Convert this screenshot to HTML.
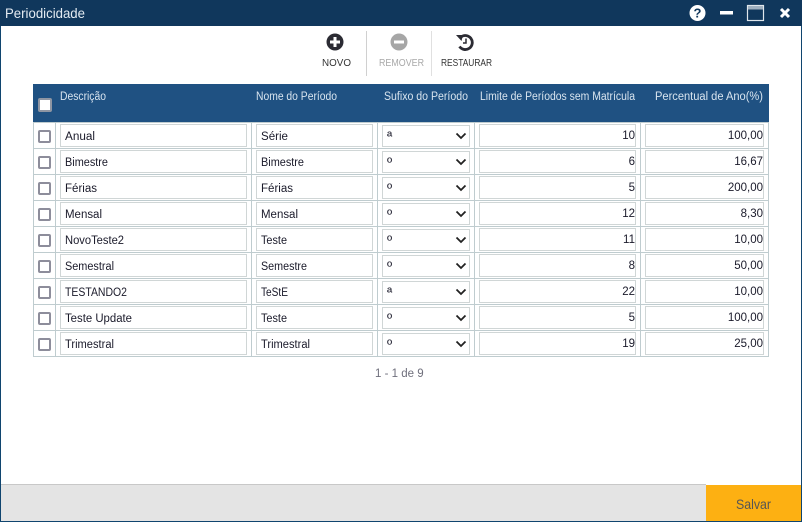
<!DOCTYPE html>
<html lang="pt"><head><meta charset="utf-8"><title>Periodicidade</title>
<style>
html,body{margin:0;padding:0;width:802px;height:522px;overflow:hidden;background:#fff}
body{position:relative;font-family:"Liberation Sans",sans-serif;font-size:11.5px;color:#1a1a2a}
.a{position:absolute}
.t{position:absolute;white-space:nowrap;line-height:14px}
.i{position:absolute;box-sizing:border-box;height:23px;border:1px solid #d0d6d6;background:#fff;line-height:23px;white-space:nowrap}
.d{left:60px;width:187px}
.n{left:256px;width:117px}
.s{left:382px;width:88px;height:22px;font-size:14px;line-height:20px;padding-left:4px}
.l{left:479px;width:157px;text-align:right}
.p{left:645px;width:119px;text-align:right}
.c{position:absolute;left:38px;width:13px;height:13px;box-sizing:border-box;border:2px solid #8d8d9b;border-radius:2px;background:#fff}
.hl{position:absolute;left:33px;width:736px;height:1px;background:#bfcccf}
.vl{position:absolute;top:122px;height:235px;width:1px;background:#bfcccf}
.ar{position:absolute;left:455px;width:12px;height:8px}
#o{position:absolute;left:0;top:0;font-family:"Liberation Sans",sans-serif}
#o text{font-size:11.5px;fill:#1a1a2a}
#o .h{fill:#d8e4ef;font-size:11.5px}
#o .b{font-size:10px;fill:#333}
</style></head><body>
<div class="a" style="left:0;top:0;width:802px;height:26px;background:#10375c"></div>
<div class="a" style="left:0;top:26px;width:1px;height:496px;background:#10456f"></div>
<div class="a" style="left:801px;top:26px;width:1px;height:496px;background:#10456f"></div>

<svg class="a" style="left:688px;top:4px" width="110" height="18" viewBox="0 0 110 18">
<circle cx="9.5" cy="9" r="8" fill="#fff"/>
<text x="9.5" y="13.5" text-anchor="middle" font-family="Liberation Sans" font-weight="bold" font-size="13" fill="#10375c">?</text>
<rect x="32" y="7" width="13" height="3.5" fill="#fff"/>
<rect x="59.5" y="1.5" width="16" height="15" fill="none" stroke="#dfe6ec" stroke-width="1.2"/>
<rect x="60" y="2" width="15" height="3.5" fill="#9fb0c0"/>
<path d="M93 5l8 8M101 5l-8 8" stroke="#fff" stroke-width="3"/>
</svg>

<svg class="a" style="left:326px;top:33px" width="18" height="18" viewBox="0 0 18 18">
<circle cx="9" cy="9" r="8.5" fill="#2b2b33"/><path d="M9 4v10M4 9h10" stroke="#fff" stroke-width="3"/></svg>
<div class="a" style="left:366px;top:31px;width:1px;height:45px;background:#d0d0d0"></div>
<svg class="a" style="left:390px;top:33px" width="18" height="18" viewBox="0 0 18 18">
<circle cx="9" cy="9" r="8.5" fill="#a6a6a6"/><path d="M4 9h10" stroke="#fff" stroke-width="3"/></svg>
<div class="a" style="left:431px;top:31px;width:1px;height:45px;background:#e0e0e0"></div>
<svg class="a" style="left:455px;top:33px" width="20" height="18" viewBox="0 0 20 18">
<path d="M6 4A7 7 0 1 1 4.5 13.5" fill="none" stroke="#2b2b33" stroke-width="2.8"/>
<path d="M1 2l7 0-1.5 6z" fill="#2b2b33"/>
<path d="M11 5.5v4.5H8" fill="none" stroke="#2b2b33" stroke-width="1.5"/></svg>

<div class="a" style="left:33px;top:84px;width:736px;height:38px;background:#1f5182"></div>
<div class="c" style="top:98px;width:14px;height:14px;border-color:#8f96a3"></div>

<div class="hl" style="top:122px"></div><div class="hl" style="top:148px"></div><div class="hl" style="top:174px"></div><div class="hl" style="top:200px"></div><div class="hl" style="top:226px"></div><div class="hl" style="top:252px"></div><div class="hl" style="top:278px"></div><div class="hl" style="top:304px"></div><div class="hl" style="top:330px"></div><div class="hl" style="top:356px"></div>
<div class="vl" style="left:33px"></div><div class="vl" style="left:55px"></div><div class="vl" style="left:251px"></div><div class="vl" style="left:377px"></div><div class="vl" style="left:474px"></div><div class="vl" style="left:640px"></div><div class="vl" style="left:768px"></div>

<div class="c" style="top:130px"></div><div class="i d" style="top:124px"></div><div class="i n" style="top:124px"></div><div class="i s" style="top:125px">ª</div><div class="i l" style="top:124px">10</div><div class="i p" style="top:124px">100,00</div>
<div class="c" style="top:156px"></div><div class="i d" style="top:150px"></div><div class="i n" style="top:150px"></div><div class="i s" style="top:151px">º</div><div class="i l" style="top:150px">6</div><div class="i p" style="top:150px">16,67</div>
<div class="c" style="top:182px"></div><div class="i d" style="top:176px"></div><div class="i n" style="top:176px"></div><div class="i s" style="top:177px">º</div><div class="i l" style="top:176px">5</div><div class="i p" style="top:176px">200,00</div>
<div class="c" style="top:208px"></div><div class="i d" style="top:202px"></div><div class="i n" style="top:202px"></div><div class="i s" style="top:203px">º</div><div class="i l" style="top:202px">12</div><div class="i p" style="top:202px">8,30</div>
<div class="c" style="top:234px"></div><div class="i d" style="top:228px"></div><div class="i n" style="top:228px"></div><div class="i s" style="top:229px">º</div><div class="i l" style="top:228px">11</div><div class="i p" style="top:228px">10,00</div>
<div class="c" style="top:260px"></div><div class="i d" style="top:254px"></div><div class="i n" style="top:254px"></div><div class="i s" style="top:255px">º</div><div class="i l" style="top:254px">8</div><div class="i p" style="top:254px">50,00</div>
<div class="c" style="top:286px"></div><div class="i d" style="top:280px"></div><div class="i n" style="top:280px"></div><div class="i s" style="top:281px">ª</div><div class="i l" style="top:280px">22</div><div class="i p" style="top:280px">10,00</div>
<div class="c" style="top:312px"></div><div class="i d" style="top:306px"></div><div class="i n" style="top:306px"></div><div class="i s" style="top:307px">º</div><div class="i l" style="top:306px">5</div><div class="i p" style="top:306px">100,00</div>
<div class="c" style="top:338px"></div><div class="i d" style="top:332px"></div><div class="i n" style="top:332px"></div><div class="i s" style="top:333px">º</div><div class="i l" style="top:332px">19</div><div class="i p" style="top:332px">25,00</div>

<svg class="ar" style="top:132px" viewBox="0 0 12 8"><path d="M1.5 1.5L6 6l4.5-4.5" fill="none" stroke="#222" stroke-width="1.8"/></svg>
<svg class="ar" style="top:158px" viewBox="0 0 12 8"><path d="M1.5 1.5L6 6l4.5-4.5" fill="none" stroke="#222" stroke-width="1.8"/></svg>
<svg class="ar" style="top:184px" viewBox="0 0 12 8"><path d="M1.5 1.5L6 6l4.5-4.5" fill="none" stroke="#222" stroke-width="1.8"/></svg>
<svg class="ar" style="top:210px" viewBox="0 0 12 8"><path d="M1.5 1.5L6 6l4.5-4.5" fill="none" stroke="#222" stroke-width="1.8"/></svg>
<svg class="ar" style="top:236px" viewBox="0 0 12 8"><path d="M1.5 1.5L6 6l4.5-4.5" fill="none" stroke="#222" stroke-width="1.8"/></svg>
<svg class="ar" style="top:262px" viewBox="0 0 12 8"><path d="M1.5 1.5L6 6l4.5-4.5" fill="none" stroke="#222" stroke-width="1.8"/></svg>
<svg class="ar" style="top:288px" viewBox="0 0 12 8"><path d="M1.5 1.5L6 6l4.5-4.5" fill="none" stroke="#222" stroke-width="1.8"/></svg>
<svg class="ar" style="top:314px" viewBox="0 0 12 8"><path d="M1.5 1.5L6 6l4.5-4.5" fill="none" stroke="#222" stroke-width="1.8"/></svg>
<svg class="ar" style="top:340px" viewBox="0 0 12 8"><path d="M1.5 1.5L6 6l4.5-4.5" fill="none" stroke="#222" stroke-width="1.8"/></svg>

<div class="t" style="left:375px;top:367px;color:#6f6f7c">1 - 1 de 9</div>

<div class="a" style="left:1px;top:484px;width:705px;height:37px;box-sizing:border-box;border-top:1px solid #c8c8c8;background:#e4e4e4"></div>
<div class="a" style="left:706px;top:485px;width:95px;height:36px;background:#fdb012"></div>
<div class="a" style="left:0;top:521px;width:802px;height:1px;background:#10456f"></div>

<svg id="o" width="802" height="522" viewBox="0 0 802 522">
<text x="5" y="18" textLength="80" lengthAdjust="spacingAndGlyphs" style="font-size:14px;fill:#e4ebf2">Periodicidade</text>
<text class="b" x="322" y="66" textLength="29" lengthAdjust="spacingAndGlyphs">NOVO</text>
<text class="b" x="379" y="66" textLength="45" lengthAdjust="spacingAndGlyphs" style="fill:#a8a8a8">REMOVER</text>
<text class="b" x="441" y="66" textLength="51" lengthAdjust="spacingAndGlyphs">RESTAURAR</text>
<text class="h" x="60" y="100" textLength="46" lengthAdjust="spacingAndGlyphs">Descrição</text>
<text class="h" x="256" y="100" textLength="81" lengthAdjust="spacingAndGlyphs">Nome do Período</text>
<text class="h" x="384" y="100" textLength="84" lengthAdjust="spacingAndGlyphs">Sufixo do Período</text>
<text class="h" x="480" y="100" textLength="155" lengthAdjust="spacingAndGlyphs">Limite de Períodos sem Matrícula</text>
<text class="h" x="655" y="100" textLength="108" lengthAdjust="spacingAndGlyphs">Percentual de Ano(%)</text>
<text x="65" y="140" textLength="30" lengthAdjust="spacingAndGlyphs">Anual</text><text x="261" y="140" textLength="27" lengthAdjust="spacingAndGlyphs">Série</text>
<text x="65" y="166" textLength="43" lengthAdjust="spacingAndGlyphs">Bimestre</text><text x="261" y="166" textLength="43" lengthAdjust="spacingAndGlyphs">Bimestre</text>
<text x="65" y="192" textLength="32" lengthAdjust="spacingAndGlyphs">Férias</text><text x="261" y="192" textLength="32" lengthAdjust="spacingAndGlyphs">Férias</text>
<text x="65" y="218" textLength="37" lengthAdjust="spacingAndGlyphs">Mensal</text><text x="261" y="218" textLength="37" lengthAdjust="spacingAndGlyphs">Mensal</text>
<text x="65" y="244" textLength="59" lengthAdjust="spacingAndGlyphs">NovoTeste2</text><text x="261" y="244" textLength="26" lengthAdjust="spacingAndGlyphs">Teste</text>
<text x="65" y="270" textLength="49" lengthAdjust="spacingAndGlyphs">Semestral</text><text x="261" y="270" textLength="46" lengthAdjust="spacingAndGlyphs">Semestre</text>
<text x="65" y="296" textLength="62" lengthAdjust="spacingAndGlyphs">TESTANDO2</text><text x="261" y="296" textLength="27" lengthAdjust="spacingAndGlyphs">TeStE</text>
<text x="65" y="322" textLength="67" lengthAdjust="spacingAndGlyphs">Teste Update</text><text x="261" y="322" textLength="26" lengthAdjust="spacingAndGlyphs">Teste</text>
<text x="65" y="348" textLength="49" lengthAdjust="spacingAndGlyphs">Trimestral</text><text x="261" y="348" textLength="49" lengthAdjust="spacingAndGlyphs">Trimestral</text>
<text x="736" y="509" textLength="35" lengthAdjust="spacingAndGlyphs" style="font-size:14px;fill:#555">Salvar</text>
</svg>
</body></html>
